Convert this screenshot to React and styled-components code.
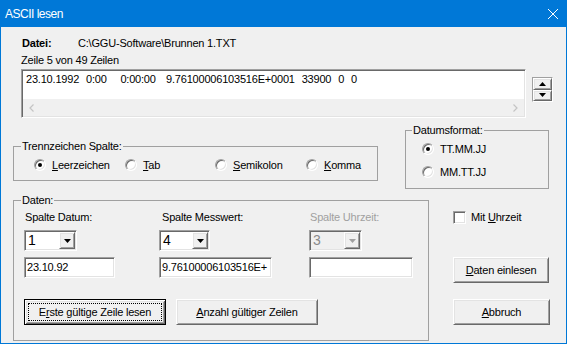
import React from 'react';
import styled, { createGlobalStyle, css } from 'styled-components';

const GlobalStyle = createGlobalStyle`
  *, *::before, *::after {
    box-sizing: border-box;
  }
  html, body {
    margin: 0;
    padding: 0;
    background: #fff;
  }
  body {
    font-family: "Liberation Sans", Arial, sans-serif;
    font-size: 11px;
    letter-spacing: -0.2px;
    color: #000;
  }
`;

// classic 3D edges
const sunken = css`
  border: 1px solid;
  border-color: #a0a0a0 #fff #fff #a0a0a0;
  box-shadow: inset 1px 1px 0 #696969, inset -1px -1px 0 #e3e3e3;
`;

const raised = css`
  border: 1px solid;
  border-color: #fff #696969 #696969 #fff;
  box-shadow: inset 1px 1px 0 #e3e3e3, inset -1px -1px 0 #a0a0a0;
`;

const Window = styled.div`
  width: 567px;
  height: 344px;
  border: 1px solid #0078d7;
  border-top: 0;
  background: #f0f0f0;
  display: flex;
  flex-direction: column;
`;

const TitleBar = styled.div`
  height: 27px;
  flex: none;
  background: #0078d7;
  color: #fff;
  display: flex;
  align-items: center;
  justify-content: space-between;
  padding-left: 4px;
`;

const Title = styled.span`
  font-size: 12px;
  letter-spacing: -0.5px;
`;

const CloseButton = styled.div`
  width: 26px;
  height: 100%;
  display: flex;
  align-items: center;
  justify-content: center;
`;

const Client = styled.div`
  flex: 1;
  display: flex;
  flex-direction: column;
  padding: 9px 0 0 12px;
`;

const FileRow = styled.div`
  display: flex;
  height: 14px;
  line-height: 14px;
  padding-left: 9px;
`;

const FileLabel = styled.span`
  font-weight: bold;
  width: 56px;
`;

const Caption = styled.div`
  margin-top: 3px;
  padding-left: 8px;
  line-height: 14px;
`;

const PreviewRow = styled.div`
  display: flex;
  align-items: flex-start;
  gap: 6px;
  margin-top: 2px;
  margin-left: 8px;
`;

const PreviewBox = styled.div`
  ${sunken};
  width: 505px;
  height: 49px;
  padding: 1px;
  background: #fff;
  display: flex;
  flex-direction: column;
`;

const PreviewText = styled.div`
  flex: 1;
  padding: 1px 0 0 3px;
  line-height: 14px;
  white-space: pre;
  word-spacing: 0.6px;
`;

const ScrollBar = styled.div`
  height: 17px;
  background: #f0f0f0;
  display: flex;
  justify-content: space-between;
`;

const ScrollArrow = styled.div`
  width: 17px;
  height: 17px;
  display: flex;
  align-items: center;
  justify-content: center;
`;

const Spin = styled.div`
  margin-top: 8px;
  width: 21px;
  height: 25px;
  border: 1px solid;
  border-color: #a0a0a0 #fff #fff #a0a0a0;
  display: flex;
  flex-direction: column;
`;

const SpinButton = styled.div`
  ${raised};
  flex: 1;
  background: #f0f0f0;
  display: flex;
  align-items: center;
  justify-content: center;
`;

const MiddleRow = styled.div`
  display: flex;
  align-items: flex-start;
  gap: 27px;
  margin-top: 5px;
`;

const GroupBox = styled.fieldset`
  margin: 0;
  margin-top: ${(p) => p.$top || 0}px;
  padding: 0;
  min-width: 0;
  border: 1px solid #a0a0a0;
  width: ${(p) => p.$w}px;
  height: ${(p) => p.$h}px;
  flex: none;
`;

const GroupLegend = styled.legend`
  padding: 0 1px;
  margin-left: ${(p) => p.$indent}px;
  line-height: 14px;
`;

const SeparatorGrid = styled.div`
  display: grid;
  grid-template-columns: 91px 90px 91px auto;
  padding: 5px 0 0 20px;
`;

const FormatList = styled.div`
  display: flex;
  flex-direction: column;
  gap: 9px;
  padding: 5px 0 0 16px;
`;

const Option = styled.label`
  display: flex;
  align-items: center;
  gap: ${(p) => p.$gap || 6}px;
  height: 14px;
  line-height: 14px;
  white-space: nowrap;
`;

const RadioDot = styled.span`
  position: relative;
  flex: none;
  width: 12px;
  height: 12px;
  border-radius: 50%;
  background: #fff;
  border: 1px solid;
  border-color: #a0a0a0 #fff #fff #a0a0a0;
  box-shadow: inset 1px 1px 0 #696969, inset -1px -1px 0 #e3e3e3;

  &::after {
    content: '';
    display: ${(p) => (p.$checked ? 'block' : 'none')};
    position: absolute;
    left: 3px;
    top: 3px;
    width: 4px;
    height: 4px;
    border-radius: 50%;
    background: #000;
  }
`;

const CheckBox = styled.span`
  ${sunken};
  flex: none;
  width: 13px;
  height: 13px;
  background: #fff;
`;

const Key = styled.u`
  text-decoration: underline;
  text-underline-offset: 1px;
`;

const BottomRow = styled.div`
  display: flex;
  align-items: flex-start;
  margin-top: 4px;
`;

const DataGrid = styled.div`
  display: grid;
  grid-template-columns: 135px 150px 1fr;
  grid-template-rows: 14px 21px 21px;
  row-gap: 6px;
  align-items: start;
  padding: 3px 0 0 10px;
`;

const FieldLabel = styled.div`
  line-height: 14px;
  padding-left: ${(p) => p.$indent || 0}px;
  color: ${(p) => (p.$disabled ? '#a0a0a0' : '#000')};
`;

const ComboBox = styled.div`
  ${sunken};
  width: ${(p) => p.$w}px;
  height: 21px;
  padding: 1px;
  display: flex;
  background: ${(p) => (p.$disabled ? '#f0f0f0' : '#fff')};
`;

const ComboValue = styled.span`
  flex: 1;
  padding-left: 2px;
  font-size: 14px;
  line-height: 17px;
  letter-spacing: 0;
  color: ${(p) => (p.$disabled ? '#8a8a8a' : '#000')};
`;

const DropButton = styled.span`
  ${raised};
  width: 16px;
  height: 17px;
  background: #f0f0f0;
  display: flex;
  align-items: center;
  justify-content: center;
`;

const TextField = styled.div`
  ${sunken};
  width: ${(p) => p.$w}px;
  height: 21px;
  padding: 0 0 0 2px;
  background: #fff;
  line-height: 19px;
  overflow: hidden;
  white-space: nowrap;
`;

const ButtonRow = styled.div`
  display: flex;
  gap: 10px;
  margin-top: 21px;
  padding-left: 10px;
`;

const PushButton = styled.button`
  ${raised};
  position: relative;
  width: ${(p) => p.$w}px;
  height: 26px;
  margin: 0;
  margin-top: ${(p) => p.$top || 0}px;
  padding: 0;
  background: #f0f0f0;
  font: inherit;
  letter-spacing: inherit;
  color: #000;
  display: flex;
  align-items: center;
  justify-content: center;

  ${(p) =>
    p.$default &&
    css`
      border: 1px solid #000;
      box-shadow: inset 1px 1px 0 #fff, inset -1px -1px 0 #696969,
        inset 2px 2px 0 #e3e3e3, inset -2px -2px 0 #a0a0a0;

      &::after {
        content: '';
        position: absolute;
        inset: 3px;
        border: 1px dotted #000;
      }
    `}
`;

const SideColumn = styled.div`
  display: flex;
  flex-direction: column;
  align-items: flex-start;
  margin-left: 24px;
  padding-top: 17px;
`;

const Triangle = ({ up, color = '#000' }) => (
  <svg width="7" height="4" viewBox="0 0 7 4">
    <path d={up ? 'M0 4h7L3.5 0z' : 'M0 0h7L3.5 4z'} fill={color} />
  </svg>
);

const Chevron = ({ right }) => (
  <svg width="5" height="8" viewBox="0 0 5 8">
    <path
      d={right ? 'M0.5 0.5L4 4L0.5 7.5' : 'M4.5 0.5L1 4L4.5 7.5'}
      fill="none"
      stroke="#c4c4c4"
      strokeWidth="1.2"
    />
  </svg>
);

const Combo = ({ value, width, disabled }) => (
  <ComboBox $w={width} $disabled={disabled}>
    <ComboValue $disabled={disabled}>{value}</ComboValue>
    <DropButton>
      <Triangle color={disabled ? '#a0a0a0' : '#000'} />
    </DropButton>
  </ComboBox>
);

const separators = [
  { key: 'L', rest: 'eerzeichen', checked: true },
  { key: 'T', rest: 'ab' },
  { key: 'S', rest: 'emikolon' },
  { key: 'K', rest: 'omma' },
];

export default function App() {
  return (
    <>
      <GlobalStyle />
      <Window>
        <TitleBar>
          <Title>ASCII lesen</Title>
          <CloseButton>
            <svg width="10" height="10" viewBox="0 0 10 10">
              <path d="M0 0L10 10M10 0L0 10" stroke="#fff" strokeWidth="1" />
            </svg>
          </CloseButton>
        </TitleBar>

        <Client>
          <FileRow>
            <FileLabel>Datei:</FileLabel>
            <span>C:\GGU-Software\Brunnen 1.TXT</span>
          </FileRow>
          <Caption>Zeile 5 von 49 Zeilen</Caption>

          <PreviewRow>
            <PreviewBox>
              <PreviewText>
                {'23.10.1992  0:00    0:00:00   9.76100006103516E+0001  33900  0  0'}
              </PreviewText>
              <ScrollBar>
                <ScrollArrow>
                  <Chevron />
                </ScrollArrow>
                <ScrollArrow>
                  <Chevron right />
                </ScrollArrow>
              </ScrollBar>
            </PreviewBox>
            <Spin>
              <SpinButton>
                <Triangle up />
              </SpinButton>
              <SpinButton>
                <Triangle />
              </SpinButton>
            </Spin>
          </PreviewRow>

          <MiddleRow>
            <GroupBox $w={365} $h={42} $top={16}>
              <GroupLegend $indent={7}>Trennzeichen Spalte:</GroupLegend>
              <SeparatorGrid>
                {separators.map((s) => (
                  <Option key={s.key}>
                    <RadioDot $checked={s.checked} />
                    <span>
                      <Key>{s.key}</Key>
                      {s.rest}
                    </span>
                  </Option>
                ))}
              </SeparatorGrid>
            </GroupBox>

            <GroupBox $w={144} $h={66}>
              <GroupLegend $indent={6}>Datumsformat:</GroupLegend>
              <FormatList>
                <Option>
                  <RadioDot $checked />
                  <span>TT.MM.JJ</span>
                </Option>
                <Option>
                  <RadioDot />
                  <span>MM.TT.JJ</span>
                </Option>
              </FormatList>
            </GroupBox>
          </MiddleRow>

          <BottomRow>
            <GroupBox $w={416} $h={148}>
              <GroupLegend $indent={7}>Daten:</GroupLegend>
              <DataGrid>
                <FieldLabel $indent={1}>Spalte Datum:</FieldLabel>
                <FieldLabel $indent={3}>Spalte Messwert:</FieldLabel>
                <FieldLabel $indent={1} $disabled>Spalte Uhrzeit:</FieldLabel>

                <Combo value="1" width={53} />
                <Combo value="4" width={51} />
                <Combo value="3" width={53} disabled />

                <TextField $w={91}>23.10.92</TextField>
                <TextField $w={113}>9.76100006103516E+</TextField>
                <TextField $w={104} />
              </DataGrid>
              <ButtonRow>
                <PushButton $w={142} $default>
                  <span>
                    E<Key>r</Key>ste gültige Zeile lesen
                  </span>
                </PushButton>
                <PushButton $w={142}>
                  <span>
                    <Key>A</Key>nzahl gültiger Zeilen
                  </span>
                </PushButton>
              </ButtonRow>
            </GroupBox>

            <SideColumn>
              <Option $gap={5}>
                <CheckBox />
                <span>
                  Mit <Key>U</Key>hrzeit
                </span>
              </Option>
              <PushButton $w={96} $top={33}>
                <span>
                  <Key>D</Key>aten einlesen
                </span>
              </PushButton>
              <PushButton $w={97} $top={16}>
                <span>
                  <Key>A</Key>bbruch
                </span>
              </PushButton>
            </SideColumn>
          </BottomRow>
        </Client>
      </Window>
    </>
  );
}
